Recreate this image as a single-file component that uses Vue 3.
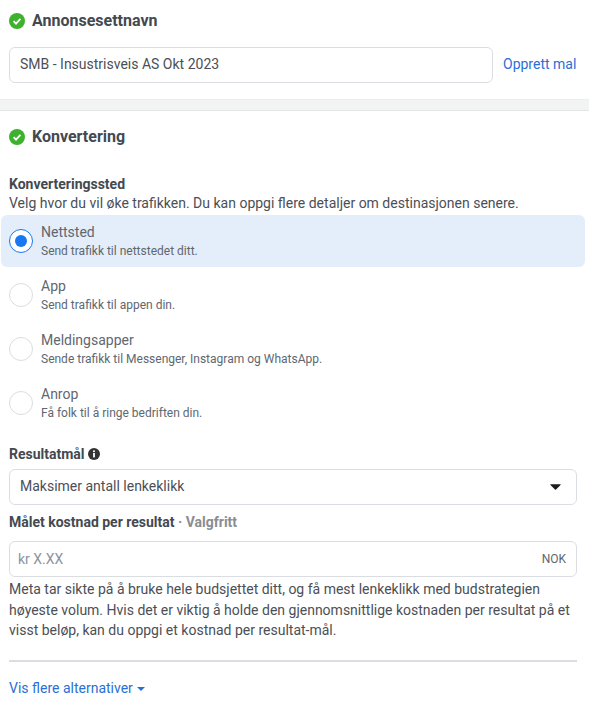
<script setup>
const options = [
  { title: 'Nettsted', sub: 'Send trafikk til nettstedet ditt.', on: true },
  { title: 'App', sub: 'Send trafikk til appen din.', on: false },
  { title: 'Meldingsapper', sub: 'Sende trafikk til Messenger, Instagram og WhatsApp.', on: false },
  { title: 'Anrop', sub: 'Få folk til å ringe bedriften din.', on: false },
]
</script>

<template>
  <div class="page">
    <section class="card first">
      <h2 class="head">
        <svg class="check" viewBox="0 0 16 16"><circle cx="8" cy="8" r="8" fill="#3eb22e" /><path d="M4.6 8.2 7 10.6 11.4 5.9" fill="none" stroke="#fff" stroke-width="1.8" /></svg>
        <span>Annonsesettnavn</span>
      </h2>
      <div class="name-row">
        <div class="field name">SMB - Insustrisveis AS Okt 2023</div>
        <a class="link">Opprett mal</a>
      </div>
    </section>
    <div class="divider"></div>
    <section class="card second">
      <h2 class="head">
        <svg class="check" viewBox="0 0 16 16"><circle cx="8" cy="8" r="8" fill="#3eb22e" /><path d="M4.6 8.2 7 10.6 11.4 5.9" fill="none" stroke="#fff" stroke-width="1.8" /></svg>
        <span>Konvertering</span>
      </h2>
      <div class="label sted">Konverteringssted</div>
      <div class="desc">Velg hvor du vil øke trafikken. Du kan oppgi flere detaljer om destinasjonen senere.</div>
      <div class="options">
        <div v-for="o in options" :key="o.title" class="option" :class="{ on: o.on }">
          <span class="radio"><span v-if="o.on" class="dot"></span></span>
          <div class="texts">
            <div class="title">{{ o.title }}</div>
            <div class="sub">{{ o.sub }}</div>
          </div>
        </div>
      </div>
      <div class="label result">
        <span>Resultatmål</span>
        <svg class="info" viewBox="0 0 12 12"><circle cx="6" cy="6" r="6" fill="#333" /><rect x="5.1" y="5" width="1.8" height="4.4" fill="#fff" /><circle cx="6" cy="3.3" r="1.05" fill="#fff" /></svg>
      </div>
      <div class="field select">
        <span>Maksimer antall lenkeklikk</span>
        <svg class="caret" viewBox="0 0 12 7"><path d="M0.4 0.4h11.2a.4.4 0 0 1 .3.7L6.6 6.4a.8.8 0 0 1-1.2 0L.1 1.1a.4.4 0 0 1 .3-.7z" fill="#1c1c1c" /></svg>
      </div>
      <div class="label cost">Målet kostnad per resultat <span class="optional">· Valgfritt</span></div>
      <div class="field amount">
        <span class="placeholder">kr X.XX</span>
        <span class="currency">NOK</span>
      </div>
      <p class="para">Meta tar sikte på å bruke hele budsjettet ditt, og få mest lenkeklikk med budstrategien høyeste volum. Hvis det er viktig å holde den gjennomsnittlige kostnaden per resultat på et visst beløp, kan du oppgi et kostnad per resultat-mål.</p>
      <div class="rule"></div>
      <a class="link more">Vis flere alternativer <span class="tri"></span></a>
    </section>
  </div>
</template>

<style scoped>
.page {
  width: 589px;
  height: 715px;
  overflow: hidden;
  background: #fff;
  font-family: Roboto, "Liberation Sans", sans-serif;
  color: #444950;
  font-size: 14px;
}
.card { padding: 0 12px 0 9px; }
.first { height: 99px; padding-top: 12px; box-sizing: border-box; }
.head {
  display: flex;
  align-items: center;
  gap: 7px;
  margin: 0;
  height: 18px;
  font-size: 16px;
  line-height: 18px;
  font-weight: 700;
  color: #444950;
}
.check { width: 16px; height: 16px; flex: none; }
.name-row { display: flex; align-items: center; margin-top: 17px; }
.field {
  box-sizing: border-box;
  height: 36px;
  border: 1px solid #dadde1;
  border-radius: 6px;
  display: flex;
  align-items: center;
  background: #fff;
}
.name { width: 484px; flex: none; padding: 0 0 2px 10px; color: #4b4f56; }
.link { color: #2a6fd6; font-size: 14px; white-space: nowrap; }
.name-row .link { margin-left: 10px; margin-bottom: 2px; flex: none; }
.divider {
  height: 10px;
  background: #f2f3f3;
  border-top: 1px solid #ebedee;
  border-bottom: 1px solid #e3e5e6;
}
.second { padding-top: 17px; }
.label { font-size: 14px; line-height: 16px; font-weight: 700; color: #444950; }
.sted { margin-top: 30px; }
.desc { font-size: 14px; line-height: 16px; color: #4b4f56; margin-top: 3px; }
.options { margin: 4px 0 0 -8px; width: 584px; }
.option {
  display: flex;
  align-items: center;
  height: 52px;
  margin-bottom: 2px;
  padding-left: 8px;
  border-radius: 6px;
  box-sizing: border-box;
}
.option.on { background: #e4eefa; }
.radio {
  box-sizing: border-box;
  width: 24px;
  height: 24px;
  border-radius: 50%;
  border: 1px solid #dadde1;
  background: #fff;
  flex: none;
  display: flex;
  align-items: center;
  justify-content: center;
}
.on .radio { border-color: #1877f2; }
.dot { width: 12px; height: 12px; border-radius: 50%; background: #1877f2; }
.texts { margin-left: 8px; }
.title { font-size: 14px; line-height: 17px; color: #606770; }
.sub { font-size: 12px; line-height: 16px; color: #606770; margin-top: 2px; }
.result { display: flex; align-items: center; gap: 3px; margin-top: 17px; }
.info { width: 12px; height: 12px; }
.select {
  margin-top: 7px;
  width: 568px;
  padding: 0 15px 0 10px;
  justify-content: space-between;
  color: #4b4f56;
}
.select span { margin-bottom: 2px; }
.caret { width: 11px; height: 6px; }
.cost { margin-top: 9px; }
.optional { color: #8a8d91; }
.amount {
  margin-top: 11px;
  width: 568px;
  padding: 0 10px 0 8px;
  justify-content: space-between;
}
.placeholder { color: #8d949e; }
.currency { font-size: 12px; color: #606770; }
.para { margin: 2px 0 0; width: 568px; font-size: 14px; line-height: 20.5px; color: #4b4f56; }
.rule { width: 568px; height: 2px; background: #dadde1; margin-top: 19px; }
.more { display: block; margin-top: 18px; line-height: 16px; }
.tri {
  display: inline-block;
  width: 0;
  height: 0;
  margin-left: 1px;
  vertical-align: 2px;
  border-left: 4px solid transparent;
  border-right: 4px solid transparent;
  border-top: 4px solid #2a6fd6;
}
</style>
